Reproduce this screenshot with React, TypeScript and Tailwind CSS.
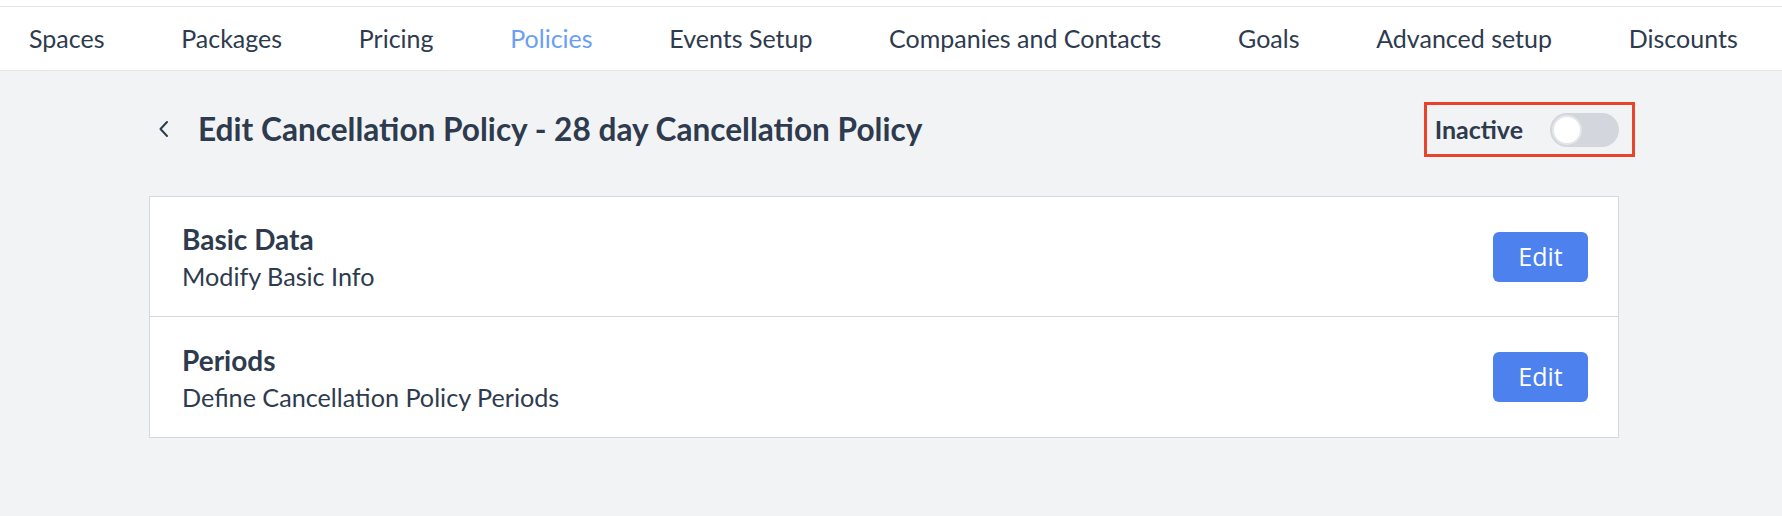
import { useState } from 'react'

const tabs = [
  'Spaces',
  'Packages',
  'Pricing',
  'Policies',
  'Events Setup',
  'Companies and Contacts',
  'Goals',
  'Advanced setup',
  'Discounts',
]

const sections = [
  { title: 'Basic Data', subtitle: 'Modify Basic Info' },
  { title: 'Periods', subtitle: 'Define Cancellation Policy Periods' },
]

function Toggle({ on, onChange }: { on: boolean; onChange: (v: boolean) => void }) {
  return (
    <button
      type="button"
      onClick={() => onChange(!on)}
      className={`flex h-[34px] w-[69px] items-center rounded-full p-[2px] ${on ? 'bg-[#4d82ee]' : 'bg-[#d3d6dd]'}`}
    >
      <span
        className={`block h-[30px] w-[30px] rounded-full border-2 border-[#e4e6ea] bg-white ${on ? 'ml-auto' : ''}`}
      />
    </button>
  )
}

export default function App() {
  const [active, setActive] = useState(false)

  return (
    <div className="min-h-[516px] bg-[#f2f3f5] font-['Lato',sans-serif] text-[#2e3b4e]">
      {/* barra de abas */}
      <div className="h-[7px] border-b border-[#e3e5e9] bg-white" />
      <nav className="flex h-[64px] items-center gap-[76.7px] border-b border-[#e3e5e9] bg-white pl-[29px] text-[25px]">
        {tabs.map(tab => (
          <span key={tab} className={tab === 'Policies' ? 'text-[#6b9ef6]' : ''}>
            {tab}
          </span>
        ))}
      </nav>

      <div className="ml-[149px] w-[1470px]">
        <div className="mt-[31px] flex items-center justify-between">
          <div className="flex items-center">
            <svg className="ml-[8px] h-[18px] w-[13px]" viewBox="0 0 13 18" fill="none">
              <polyline points="10,2 3.5,9 10,16" stroke="#2e3b4e" strokeWidth="2" strokeLinecap="round" strokeLinejoin="round" />
            </svg>
            <h1 className="ml-[28px] text-[31.6px] font-bold">Edit Cancellation Policy - 28 day Cancellation Policy</h1>
          </div>
          <div className="-mr-[16px] flex h-[55px] items-center gap-[27px] border-[3px] border-[#e8432b] pl-[8px] pr-[13px]">
            <span className="text-[25px] font-bold">{active ? 'Active' : 'Inactive'}</span>
            <Toggle on={active} onChange={setActive} />
          </div>
        </div>

        <div className="mt-[39px] border border-[#d5d8de] bg-white">
          {sections.map((s, i) => (
            <div
              key={s.title}
              className={`flex h-[120px] items-center justify-between pl-[32px] pr-[30px] ${i === 0 ? 'border-b border-[#d5d8de]' : ''}`}
            >
              <div className="flex flex-col">
                <span className="text-[28px] font-bold leading-[36px]">{s.title}</span>
                <span className="mt-[3px] text-[25.2px] leading-[32px]">{s.subtitle}</span>
              </div>
              <button
                type="button"
                className="h-[50px] w-[95px] rounded-[6px] bg-[#4d82ee] font-['Open_Sans',sans-serif] text-[25px] text-white"
              >
                Edit
              </button>
            </div>
          ))}
        </div>
      </div>
    </div>
  )
}
